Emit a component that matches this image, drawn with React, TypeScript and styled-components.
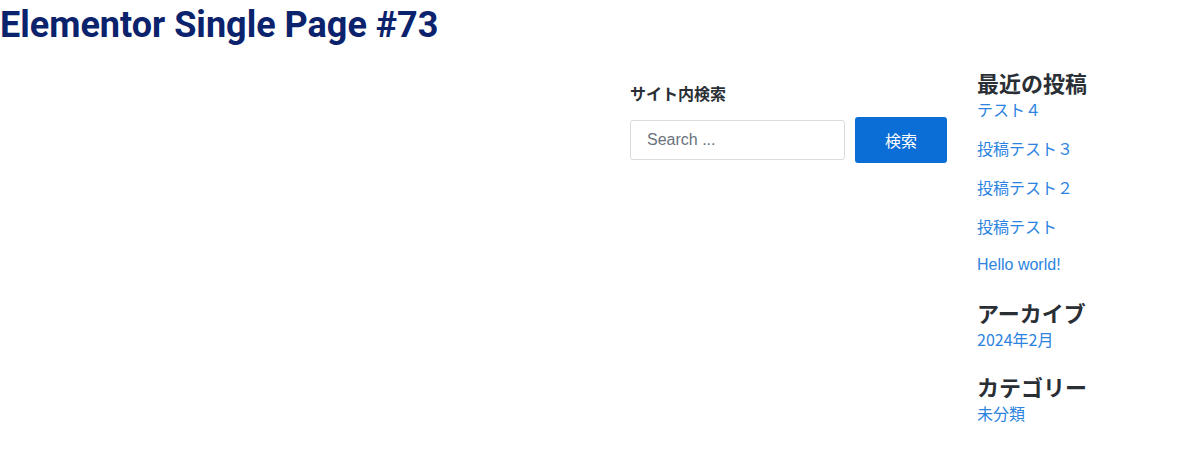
import React from "react";
import styled, {createGlobalStyle} from "styled-components";

const GlobalStyle = createGlobalStyle`
    html, body {
        margin: 0;
        padding: 0;
        background: #fff;
    }
    body {
        font-family: "Liberation Sans", "Noto Sans CJK JP", sans-serif;
        color: #333;
    }
`;

const Page = styled.div`
    width: 1200px;
`;

const Title = styled.h1`
    margin: 0;
    padding-top: 3px;
    font-family: Roboto, sans-serif;
    font-weight: 700;
    font-size: 36px;
    line-height: 44px;
    color: #0b226c;
`;

const Columns = styled.div`
    display: flex;
    padding-top: 21px;
`;

const Spacer = styled.div`
    flex: 1;
`;

const SearchWidget = styled.div`
    width: 317px;
    padding-top: 13px;
`;

const WidgetLabel = styled.div`
    font-family: "Noto Sans CJK JP", sans-serif;
    font-size: 16px;
    font-weight: 700;
    line-height: 24px;
    color: #2a2f36;
    margin-bottom: 12px;
`;

const SearchRow = styled.form`
    display: flex;
    align-items: center;
    gap: 10px;
`;

const SearchInput = styled.input`
    box-sizing: border-box;
    width: 215px;
    height: 40px;
    padding: 0 16px;
    border: 1px solid #d8dbe0;
    border-radius: 3px;
    font-family: "Liberation Sans", sans-serif;
    font-size: 16px;
    color: #333;
    outline: none;
    &::placeholder {
        color: #69727d;
    }
`;

const SearchButton = styled.button`
    box-sizing: border-box;
    width: 92px;
    height: 46px;
    border: none;
    border-radius: 3px;
    background: #0b6dd6;
    color: #fff;
    font-family: "Noto Sans CJK JP", sans-serif;
    font-size: 16px;
    padding: 0;
`;

const Sidebar = styled.aside`
    width: 223px;
    margin-left: 30px;
`;

const SectionTitle = styled.h2`
    margin: 0 0 1px;
    font-family: "Noto Sans CJK JP", sans-serif;
    font-size: 22px;
    font-weight: 700;
    line-height: 28px;
    color: #2a2f36;
`;

const LinkList = styled.ul`
    list-style: none;
    margin: 0 0 21px;
    padding: 0;
`;

const Item = styled.li`
    & + & {
        margin-top: 15px;
    }
`;

const ItemLink = styled.a<{$latin?: boolean}>`
    display: block;
    text-decoration: none;
    color: #2d84e0;
    font-family: ${p => p.$latin ? `"Liberation Sans", sans-serif` : `"Noto Sans CJK JP", sans-serif`};
    font-size: 16px;
    line-height: 24px;
`;

const sections = [
    {title: "最近の投稿", items: ["テスト４", "投稿テスト３", "投稿テスト２", "投稿テスト", "Hello world!"]},
    {title: "アーカイブ", items: ["2024年2月"]},
    {title: "カテゴリー", items: ["未分類"]},
];

const App = () => {
    return (
        <Page>
            <GlobalStyle/>
            <Title>Elementor Single Page #73</Title>
            <Columns>
                <Spacer/>
                <SearchWidget>
                    <WidgetLabel>サイト内検索</WidgetLabel>
                    <SearchRow onSubmit={e => e.preventDefault()}>
                        <SearchInput type="search" placeholder="Search ..."/>
                        <SearchButton type="submit">検索</SearchButton>
                    </SearchRow>
                </SearchWidget>
                <Sidebar>
                    {sections.map(s => (
                        <div key={s.title}>
                            <SectionTitle>{s.title}</SectionTitle>
                            <LinkList>
                                {s.items.map(i => (
                                    <Item key={i}>
                                        <ItemLink href="#" $latin={/^[A-Za-z]/.test(i)}>{i}</ItemLink>
                                    </Item>
                                ))}
                            </LinkList>
                        </div>
                    ))}
                </Sidebar>
            </Columns>
        </Page>
    )
}
export default App;
